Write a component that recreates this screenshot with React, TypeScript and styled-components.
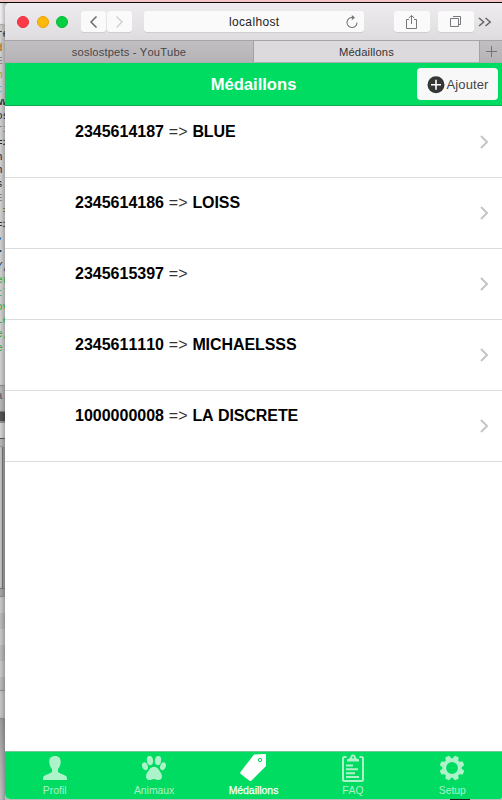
import React from "react";
import styled, { createGlobalStyle } from "styled-components";

const GlobalStyle = createGlobalStyle`
  * { box-sizing: border-box; }
  body {
    margin: 0;
    overflow: hidden;
    background: #c4c4c4;
    font-family: "Liberation Sans", Arial, sans-serif;
    font-kerning: none;
  }
`;

const GREEN = "#00db62";

const Desktop = styled.div`
  width: 502px;
  height: 800px;
  display: flex;
  flex-direction: column;
  overflow: hidden;
`;

const TopStrip = styled.div`
  height: 3px;
  flex: none;
  background: #f3c4c6;
  border-bottom: 1px solid #0c0808;
`;

const Workspace = styled.div`
  flex: 1;
  min-height: 0;
  display: flex;
  background: linear-gradient(90deg, #bcbcbc 0 450px, #222 450px 470px, #bcbcbc 470px);
`;

const Behind = styled.div`
  width: 5px;
  flex: none;
  overflow: hidden;
  display: flex;
  flex-direction: column;
`;

const Band = styled.div<{ $h: number; $bg: string; $line?: string; $pad?: number }>`
  height: ${(p) => p.$h}px;
  flex: none;
  padding-top: ${(p) => p.$pad ?? 0}px;
  background: ${(p) => p.$bg};
  border-bottom: ${(p) => (p.$line ? `1px solid ${p.$line}` : "none")};
  box-shadow: inset -4px 0 4px -2px rgba(0, 0, 0, 0.28);
  overflow: hidden;
`;

const CodeLine = styled.div<{ $c: string }>`
  height: 13.65px;
  font: 11px/13.65px "Liberation Mono", monospace;
  color: ${(p) => p.$c};
  white-space: pre;
  text-indent: -4px;
`;

const Window = styled.div`
  flex: 1;
  min-width: 0;
  height: 796px;
  display: flex;
  flex-direction: column;
  background: #fff;
  border-radius: 5px 0 2px 5px;
  overflow: hidden;
`;

const Toolbar = styled.div`
  height: 37px;
  flex: none;
  display: flex;
  align-items: center;
  padding-left: 12px;
  background: linear-gradient(#eeecee, #dedcdf);
`;

const Light = styled.span<{ $c: string; $b: string }>`
  width: 12px;
  height: 12px;
  flex: none;
  border-radius: 50%;
  margin-right: 7.5px;
  background: ${(p) => p.$c};
  border: 1px solid ${(p) => p.$b};
`;

const ToolButton = styled.div<{ $w: number; $ml?: number }>`
  width: ${(p) => p.$w}px;
  height: 21px;
  flex: none;
  margin-left: ${(p) => p.$ml ?? 0}px;
  display: flex;
  align-items: center;
  justify-content: center;
  background: #fbfafb;
  border-radius: 3px;
  box-shadow: 0 1px 0 #cfcdd0;
`;

const Address = styled(ToolButton)`
  justify-content: flex-end;
  padding-right: 5px;
  font-size: 12px;
  letter-spacing: 0.35px;
  color: #222;
  gap: 65px;
`;

const More = styled.div`
  margin-left: 4px;
  display: flex;
`;

const TabStrip = styled.div`
  height: 23px;
  flex: none;
  display: flex;
  border-top: 1px solid #a6a4a7;
  border-bottom: 1px solid #b0aeb1;
`;

const BrowserTab = styled.div<{ $w: number; $active?: boolean }>`
  width: ${(p) => p.$w}px;
  flex: none;
  display: flex;
  align-items: center;
  justify-content: center;
  font-size: 11.2px;
  letter-spacing: ${(p) => (p.$active ? 0.15 : 0.15)}px;
  color: ${(p) => (p.$active ? "#333" : "#48464a")};
  background: ${(p) => (p.$active ? "#dcdadd" : "linear-gradient(#c1bfc2, #b5b3b6)")};
  border-right: 1px solid #a3a1a4;
`;

const Header = styled.header`
  height: 43px;
  flex: none;
  display: grid;
  grid-template-columns: 1fr auto 1fr;
  align-items: center;
  padding-right: 4px;
  background: ${GREEN};
  border-bottom: 1px solid #0aa950;
`;

const Title = styled.h1`
  margin: 2px 0 0 4px;
  font-size: 16.6px;
  line-height: 20px;
  color: #fff;
`;

const AddButton = styled.button`
  justify-self: end;
  width: 81px;
  height: 32px;
  padding: 1px 0 0;
  border: 0;
  border-radius: 4px;
  background: #f8f8f8;
  display: flex;
  align-items: center;
  justify-content: center;
  gap: 2px;
  font: 13px "Liberation Sans", Arial, sans-serif;
  letter-spacing: 0.1px;
  color: #444;
`;

const List = styled.main`
  flex: 1;
  min-height: 0;
  padding-top: 1px;
`;

const Row = styled.div`
  height: 71px;
  display: flex;
  justify-content: space-between;
  padding: 15px 12px 0 70px;
  border-bottom: 1px solid #dcdcdc;
  font-size: 16px;
  line-height: 20px;
  color: #000;
  white-space: pre;
`;

const MedalName = styled.b`
  letter-spacing: -0.08px;
`;

const Arrow = styled.span`
  color: #333;
  font-weight: 400;
  letter-spacing: 0.2px;
`;

const Chevron = styled.svg`
  margin-top: 12px;
`;

const BottomBar = styled.nav`
  height: 48px;
  flex: none;
  display: grid;
  grid-template-columns: repeat(5, 1fr);
  background: ${GREEN};
  border-top: 1px solid #72c895;
`;

const BottomTab = styled.div<{ $active?: boolean }>`
  display: flex;
  flex-direction: column;
  align-items: center;
  padding-top: 2px;
  color: ${(p) => (p.$active ? "#fff" : "#adf3ca")};
  font-size: 10.4px;
  line-height: 12px;
  gap: 2px;
  -webkit-text-stroke: ${(p) => (p.$active ? "0.25px #fff" : "0")};
`;

const code: [string, string][] = [
  ["re", "#222"], ["d:", "#b65b18"], ["E:", "#777"], ["m ", "#aaa000"], ["t ", "#20bdd0"],
  ["ww", "#111"], ["os", "#162447"], ["ri", "#777"], ["=>", "#222"], ["n'", "#151b45"],
  ["n'", "#151b45"], ["s ", "#122246"], ["E:", "#777"], [" =", "#776a50"], ["=>", "#333"],
  ["• ", "#223e78"], ["➤ ", "#111"], ["Y,", "#193965"], ["er", "#26a842"], ["tl", "#26a842"],
  ["ov", "#26a842"], ["Le", "#26a842"], ["e,", "#26a842"], ["e ", "#26a842"],
];

const medals = [
  ["2345614187", "BLUE"],
  ["2345614186", "LOISS"],
  ["2345615397", ""],
  ["2345611110", "MICHAELSSS"],
  ["1000000008", "LA DISCRETE"],
];

const ProfileIcon = () => (
  <svg width="26" height="29" viewBox="0 0 26 29" fill="currentColor">
    <path d="M13 2c-4.200 0-6 2.600-5.700 6.300.2 3 1.200 5.200 2.700 6.800v2.800c-1.200 1.500-7.600 2.700-8.600 4.900-.4.900-.4 2.200-.4 3.200h24c0-1 0-2.300-.4-3.200-1-2.200-7.400-3.400-8.600-4.900v-2.800c1.500-1.600 2.500-3.800 2.700-6.800C18.900 4.600 17.200 2 13 2z" />
  </svg>
);

const PawIcon = () => (
  <svg width="26" height="29" viewBox="0 0 26 29" fill="currentColor">
    <ellipse cx="9" cy="6.600" rx="3.100" ry="4.600" transform="rotate(-8 9 6.600)" />
    <ellipse cx="17" cy="6.600" rx="3.100" ry="4.600" transform="rotate(8 17 6.600)" />
    <ellipse cx="4" cy="12.200" rx="2.800" ry="4" transform="rotate(-20 4 12.200)" />
    <ellipse cx="22" cy="12.200" rx="2.800" ry="4" transform="rotate(20 22 12.200)" />
    <path d="M13 12.700c-3 0-4.300 2.200-5.700 4.300-1.300 2-2.500 3.400-2.300 5.800.1 2.200 1.700 3.200 3.500 3.200 1.700 0 2.700-1.100 4.500-1.100s2.800 1.100 4.500 1.100c1.800 0 3.400-1 3.500-3.200.2-2.400-1-3.800-2.300-5.800-1.400-2.100-2.700-4.300-5.700-4.300z" />
  </svg>
);

const TagIcon = () => (
  <svg width="28" height="29" viewBox="0 0 28 29">
    <path fill="currentColor" d="M15 .5 26 0q1 0 1 1v11L12.500 26.500q-1.200 1-2.300 0L1.800 20q-1.200-1-.3-2z" />
    <circle cx="21" cy="6" r="1.700" fill="#fff" stroke={GREEN} strokeWidth="1" />
  </svg>
);

const ClipboardIcon = () => (
  <svg width="24" height="29" viewBox="0 0 24 29" fill="none" stroke="currentColor">
    <path d="M5.500 3H3.500Q2 3 2 4.500v21Q2 27 3.500 27h17q1.500 0 1.500-1.500v-21Q22 3 20.500 3H18.500" strokeWidth="2" />
    <path d="M6 7.500h12V5.400l-3-1.300C14.700 1.700 13.800.5 12 .5S9.300 1.700 9 4.100L6 5.400z" fill="currentColor" stroke="none" />
    <circle cx="12" cy="3.500" r="1" fill={GREEN} stroke="none" />
    <path d="M5 11.500h7M5 15.300h12M5 19.200h9M5 23h13" strokeWidth="2" />
  </svg>
);

const gearTeeth = [0, 45, 90, 135, 180, 225, 270, 315];

const GearIcon = () => (
  <svg width="26" height="29" viewBox="0 0 26 29">
    <circle cx="13" cy="14" r="7.700" fill="none" stroke="currentColor" strokeWidth="3.600" />
    {gearTeeth.map((a) => (
      <path key={a} d="M9.600 5.800 11 1.600h4l1.400 4.200z" fill="currentColor" transform={`rotate(${a + 22.5} 13 14)`} />
    ))}
  </svg>
);

const Browser = () => (
  <>
    <Toolbar>
      <Light $c="#fc3948" $b="#e82f3d" />
      <Light $c="#fdb90a" $b="#e8a303" />
      <Light $c="#05ce40" $b="#02b936" />
      <ToolButton $w={25} $ml={5}>
        <svg width="9" height="14" viewBox="0 0 9 14" fill="none" stroke="#6b696d" strokeWidth="1.500">
          <path d="M7.500 1.500 2 7l5.500 5.500" />
        </svg>
      </ToolButton>
      <ToolButton $w={25} $ml={1}>
        <svg width="9" height="14" viewBox="0 0 9 14" fill="none" stroke="#d0ced1" strokeWidth="1.400">
          <path d="M1.500 1.500 7 7l-5.500 5.500" />
        </svg>
      </ToolButton>
      <Address $w={220} $ml={12}>
        <span>localhost</span>
        <svg width="14" height="14" viewBox="0 0 14 14" fill="none" stroke="#77757a" strokeWidth="1.100">
          <path d="M7.500 2.500A5 5 0 1 0 12 7.500" />
          <path d="M6.800 0 10 2.600 6.800 5.200z" fill="#77757a" stroke="none" />
        </svg>
      </Address>
      <ToolButton $w={36} $ml={30}>
        <svg width="13" height="16" viewBox="0 0 13 16" fill="none" stroke="#79777b">
          <path d="M4 5.500H1.500v9h10v-9H9M6.500 10V1.500M3.800 4.100l2.700-2.700 2.700 2.700" />
        </svg>
      </ToolButton>
      <ToolButton $w={36} $ml={8}>
        <svg width="13" height="13" viewBox="0 0 13 13" fill="none" stroke="#79777b">
          <path d="M1.500 3.500h8v8h-8zM4 1.500h7.500v8h-2" />
        </svg>
      </ToolButton>
      <More>
        <svg width="14" height="10" viewBox="0 0 14 10" fill="none" stroke="#66646a" strokeWidth="1.500">
          <path d="m1 1 4.700 4L1 9M7.500 1 12.200 5 7.500 9" />
        </svg>
      </More>
    </Toolbar>
    <TabStrip>
      <BrowserTab $w={249}>soslostpets - YouTube</BrowserTab>
      <BrowserTab $w={226} $active>Médaillons</BrowserTab>
      <BrowserTab $w={23}>
        <svg width="11" height="11" viewBox="0 0 11 11" stroke="#757377">
          <path d="M5.500 0v11M0 5.500h11" />
        </svg>
      </BrowserTab>
    </TabStrip>
  </>
);

export default function App() {
  return (
    <Desktop>
      <GlobalStyle />
      <TopStrip />
      <Workspace>
        <Behind>
          <Band $h={22} $bg="#f5f5f5" $line="#aaa" />
          <Band $h={361} $bg="#d4d4d4" $line="#888" $pad={3}>
            {code.map(([text, color], i) => (
              <CodeLine key={i} $c={color}>{text}</CodeLine>
            ))}
          </Band>
          <Band $h={26} $bg="#bbb" $line="#777" $pad={4}><CodeLine $c="#50525c">a:</CodeLine></Band>
          <Band $h={9} $bg="#555" />
          <Band $h={18} $bg="linear-gradient(#999 0 2px, #d7d7d7 2px)" $line="#555" />
          <Band $h={8} $bg="#bcbcbc" $line="#999" />
          <Band $h={142} $bg="linear-gradient(90deg, #c5c5c5 2px, #777 2px 3px, #aaa 3px)" $line="#777" />
          <Band $h={8} $bg="#aaa" $line="#888" />
          <Band $h={94} $bg="repeating-linear-gradient(#ccc 0 16px, #bebebe 16px 32px)" $line="#888" />
          <Band $h={28} $bg="#cacaca" $line="#888" />
          <Band $h={81} $bg="linear-gradient(#a2a2a2, #c5c5c5)" />
        </Behind>
        <Window>
          <Browser />
          <Header>
            <span />
            <Title>Médaillons</Title>
            <AddButton>
              <svg width="18" height="18" viewBox="0 0 18 18">
                <circle cx="9" cy="8.700" r="8.500" fill="#363636" />
                <path d="M9 3.700v10M4 8.700h10" stroke="#fff" strokeWidth="1.600" />
              </svg>
              Ajouter
            </AddButton>
          </Header>
          <List>
            {medals.map(([id, name]) => (
              <Row key={id}>
                <span><b>{id}</b><Arrow>{" => "}</Arrow><MedalName>{name}</MedalName></span>
                <Chevron width="11" height="16" viewBox="0 0 11 16" fill="none" stroke="#c5c5c5" strokeWidth="2">
                  <path d="m2 2 6 6-6 6" />
                </Chevron>
              </Row>
            ))}
          </List>
          <BottomBar>
            <BottomTab><ProfileIcon />Profil</BottomTab>
            <BottomTab><PawIcon />Animaux</BottomTab>
            <BottomTab $active><TagIcon />Médaillons</BottomTab>
            <BottomTab><ClipboardIcon />FAQ</BottomTab>
            <BottomTab><GearIcon />Setup</BottomTab>
          </BottomBar>
        </Window>
      </Workspace>
    </Desktop>
  );
}
